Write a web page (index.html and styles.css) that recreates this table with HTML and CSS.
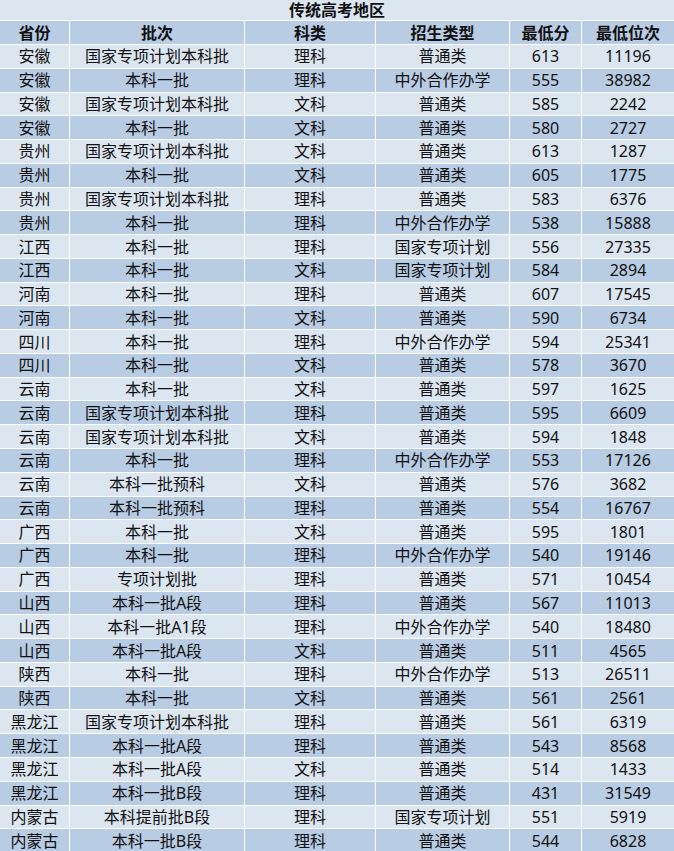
FILE: index.html
```html
<!DOCTYPE html>
<html lang="zh-CN">
<head>
<meta charset="utf-8">
<title>传统高考地区</title>
<link rel="stylesheet" href="styles.css">
</head>
<body>
<div class="sheet">
  <div class="title">传统高考地区</div>
  <div class="c h">省份</div><div class="c h">批次</div><div class="c h">科类</div><div class="c h">招生类型</div><div class="c h">最低分</div><div class="c h">最低位次</div>

  <div class="c a">安徽</div><div class="c a">国家专项计划本科批</div><div class="c a">理科</div><div class="c a">普通类</div><div class="c a">613</div><div class="c a">11196</div>
  <div class="c b">安徽</div><div class="c b">本科一批</div><div class="c b">理科</div><div class="c b">中外合作办学</div><div class="c b">555</div><div class="c b">38982</div>
  <div class="c a">安徽</div><div class="c a">国家专项计划本科批</div><div class="c a">文科</div><div class="c a">普通类</div><div class="c a">585</div><div class="c a">2242</div>
  <div class="c b">安徽</div><div class="c b">本科一批</div><div class="c b">文科</div><div class="c b">普通类</div><div class="c b">580</div><div class="c b">2727</div>
  <div class="c a">贵州</div><div class="c a">国家专项计划本科批</div><div class="c a">文科</div><div class="c a">普通类</div><div class="c a">613</div><div class="c a">1287</div>
  <div class="c b">贵州</div><div class="c b">本科一批</div><div class="c b">文科</div><div class="c b">普通类</div><div class="c b">605</div><div class="c b">1775</div>
  <div class="c a">贵州</div><div class="c a">国家专项计划本科批</div><div class="c a">理科</div><div class="c a">普通类</div><div class="c a">583</div><div class="c a">6376</div>
  <div class="c b">贵州</div><div class="c b">本科一批</div><div class="c b">理科</div><div class="c b">中外合作办学</div><div class="c b">538</div><div class="c b">15888</div>
  <div class="c a">江西</div><div class="c a">本科一批</div><div class="c a">理科</div><div class="c a">国家专项计划</div><div class="c a">556</div><div class="c a">27335</div>
  <div class="c b">江西</div><div class="c b">本科一批</div><div class="c b">文科</div><div class="c b">国家专项计划</div><div class="c b">584</div><div class="c b">2894</div>
  <div class="c a">河南</div><div class="c a">本科一批</div><div class="c a">理科</div><div class="c a">普通类</div><div class="c a">607</div><div class="c a">17545</div>
  <div class="c b">河南</div><div class="c b">本科一批</div><div class="c b">文科</div><div class="c b">普通类</div><div class="c b">590</div><div class="c b">6734</div>
  <div class="c a">四川</div><div class="c a">本科一批</div><div class="c a">理科</div><div class="c a">中外合作办学</div><div class="c a">594</div><div class="c a">25341</div>
  <div class="c b">四川</div><div class="c b">本科一批</div><div class="c b">文科</div><div class="c b">普通类</div><div class="c b">578</div><div class="c b">3670</div>
  <div class="c a">云南</div><div class="c a">本科一批</div><div class="c a">文科</div><div class="c a">普通类</div><div class="c a">597</div><div class="c a">1625</div>
  <div class="c b">云南</div><div class="c b">国家专项计划本科批</div><div class="c b">理科</div><div class="c b">普通类</div><div class="c b">595</div><div class="c b">6609</div>
  <div class="c a">云南</div><div class="c a">国家专项计划本科批</div><div class="c a">文科</div><div class="c a">普通类</div><div class="c a">594</div><div class="c a">1848</div>
  <div class="c b">云南</div><div class="c b">本科一批</div><div class="c b">理科</div><div class="c b">中外合作办学</div><div class="c b">553</div><div class="c b">17126</div>
  <div class="c a">云南</div><div class="c a">本科一批预科</div><div class="c a">文科</div><div class="c a">普通类</div><div class="c a">576</div><div class="c a">3682</div>
  <div class="c b">云南</div><div class="c b">本科一批预科</div><div class="c b">理科</div><div class="c b">普通类</div><div class="c b">554</div><div class="c b">16767</div>
  <div class="c a">广西</div><div class="c a">本科一批</div><div class="c a">文科</div><div class="c a">普通类</div><div class="c a">595</div><div class="c a">1801</div>
  <div class="c b">广西</div><div class="c b">本科一批</div><div class="c b">理科</div><div class="c b">中外合作办学</div><div class="c b">540</div><div class="c b">19146</div>
  <div class="c a">广西</div><div class="c a">专项计划批</div><div class="c a">理科</div><div class="c a">普通类</div><div class="c a">571</div><div class="c a">10454</div>
  <div class="c b">山西</div><div class="c b">本科一批A段</div><div class="c b">理科</div><div class="c b">普通类</div><div class="c b">567</div><div class="c b">11013</div>
  <div class="c a">山西</div><div class="c a">本科一批A1段</div><div class="c a">理科</div><div class="c a">中外合作办学</div><div class="c a">540</div><div class="c a">18480</div>
  <div class="c b">山西</div><div class="c b">本科一批A段</div><div class="c b">文科</div><div class="c b">普通类</div><div class="c b">511</div><div class="c b">4565</div>
  <div class="c a">陕西</div><div class="c a">本科一批</div><div class="c a">理科</div><div class="c a">中外合作办学</div><div class="c a">513</div><div class="c a">26511</div>
  <div class="c b">陕西</div><div class="c b">本科一批</div><div class="c b">文科</div><div class="c b">普通类</div><div class="c b">561</div><div class="c b">2561</div>
  <div class="c a">黑龙江</div><div class="c a">国家专项计划本科批</div><div class="c a">理科</div><div class="c a">普通类</div><div class="c a">561</div><div class="c a">6319</div>
  <div class="c b">黑龙江</div><div class="c b">本科一批A段</div><div class="c b">理科</div><div class="c b">普通类</div><div class="c b">543</div><div class="c b">8568</div>
  <div class="c a">黑龙江</div><div class="c a">本科一批A段</div><div class="c a">文科</div><div class="c a">普通类</div><div class="c a">514</div><div class="c a">1433</div>
  <div class="c b">黑龙江</div><div class="c b">本科一批B段</div><div class="c b">理科</div><div class="c b">普通类</div><div class="c b">431</div><div class="c b">31549</div>
  <div class="c a">内蒙古</div><div class="c a">本科提前批B段</div><div class="c a">理科</div><div class="c a">国家专项计划</div><div class="c a">551</div><div class="c a">5919</div>
  <div class="c b">内蒙古</div><div class="c b">本科一批B段</div><div class="c b">理科</div><div class="c b">普通类</div><div class="c b">544</div><div class="c b">6828</div>
</div>
</body>
</html>
```

FILE: styles.css
```css
html, body {
  margin: 0;
  padding: 0;
  background: #ffffff;
  overflow: hidden;
}

.sheet {
  display: grid;
  grid-template-columns: 69px 174px 130px 133px 71px 1fr;
  grid-template-rows: 20px 23px repeat(34, 22.78px);
  gap: 1px;
  background: #ffffff;
  width: 674px;
  font-family: "Noto Sans", "Noto Sans CJK SC", sans-serif;
  font-size: 16px;
  color: #111111;
}

.title {
  grid-column: 1 / -1;
  background: #dce6f1;
  display: flex;
  align-items: center;
  justify-content: center;
  font-weight: 700;
  line-height: 1;
}

.c {
  display: flex;
  align-items: center;
  justify-content: center;
  line-height: 1;
  white-space: nowrap;
}

.h {
  background: #b8cce4;
  font-weight: 700;
}

.a {
  background: #dce6f1;
}

.b {
  background: #b8cce4;
}
```
